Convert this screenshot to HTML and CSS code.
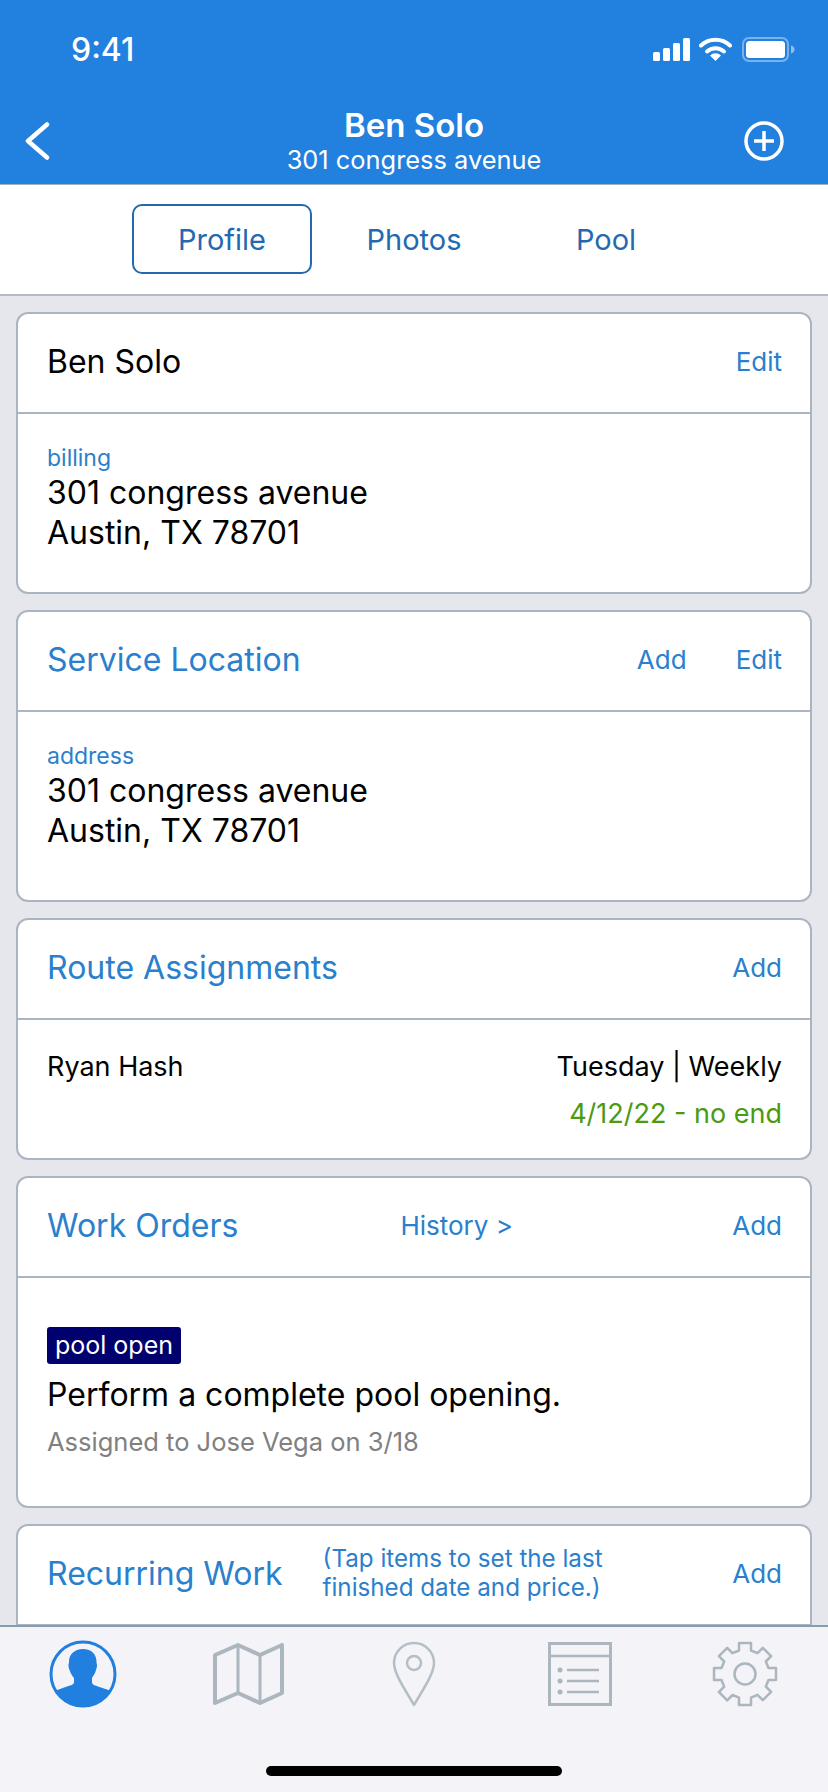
FILE: index.html
```html
<!DOCTYPE html>
<html lang="en">
<head>
    <meta charset="UTF-8">
    <meta name="viewport" content="width=device-width, initial-scale=1.0">
    <title>Ben Solo</title>
    <link rel="stylesheet" href="styles.css">
</head>
<body>
<div class="app">

    <!-- Blue header -->
    <div class="header">
        <div class="status-bar">
            <span class="time">9:41</span>
            <div class="status-icons">
                <svg class="signal" width="37" height="23" viewBox="0 0 37 23"><rect x="0" y="14" width="7" height="9" rx="1.5"/><rect x="10" y="10" width="7" height="13" rx="1.5"/><rect x="20" y="5" width="7" height="18" rx="1.5"/><rect x="30" y="0" width="7" height="23" rx="1.5"/></svg>
                <svg width="33" height="24" viewBox="0 0 33 24"><path d="M2 8.500a21 21 0 0 1 29 0" fill="none" stroke="#fff" stroke-width="4" stroke-linecap="round"/><path d="M8 14.500a12.500 12.500 0 0 1 17 0" fill="none" stroke="#fff" stroke-width="4" stroke-linecap="round"/><path d="M16.500 24l-5.500-5.500a8 8 0 0 1 11 0z"/></svg>
                <svg width="53" height="25" viewBox="0 0 53 25"><rect x="1" y="1" width="45" height="23" rx="6" fill="none" stroke="#fff" stroke-opacity="0.4" stroke-width="2"/><rect x="4" y="4" width="39" height="17" rx="3.500"/><path d="M49 8.500c2 .5 3.500 2 3.500 4s-1.500 3.500-3.500 4z" fill-opacity="0.5"/></svg>
            </div>
        </div>
        <div class="nav-bar">
            <svg class="back-icon" width="26" height="38" viewBox="0 0 26 38"><path d="M23 2.500L4 19l19 16.500" fill="none" stroke="#fff" stroke-width="4.500" stroke-linecap="round" stroke-linejoin="round"/></svg>
            <div class="nav-title">
                <div class="nav-name">Ben Solo</div>
                <div class="nav-sub">301 congress avenue</div>
            </div>
            <svg class="add-icon" width="40" height="40" viewBox="0 0 40 40"><circle cx="20" cy="20" r="18" fill="none" stroke="#fff" stroke-width="3.500"/><path d="M20 10v20M10 20h20" stroke="#fff" stroke-width="3.500"/></svg>
        </div>
    </div>

    <!-- Tabs -->
    <div class="tabs">
        <div class="tab active">Profile</div>
        <div class="tab">Photos</div>
        <div class="tab">Pool</div>
    </div>

    <!-- Cards -->
    <div class="content">
        <div class="card">
            <div class="card-head">
                <span class="card-name">Ben Solo</span>
                <span class="link">Edit</span>
            </div>
            <div class="card-body address-body">
                <div class="label">billing</div>
                <div class="address">301 congress avenue<br>Austin, TX 78701</div>
            </div>
        </div>

        <div class="card">
            <div class="card-head">
                <span class="card-title">Service Location</span>
                <div class="head-links">
                    <span class="link">Add</span>
                    <span class="link">Edit</span>
                </div>
            </div>
            <div class="card-body address-body tall">
                <div class="label">address</div>
                <div class="address">301 congress avenue<br>Austin, TX 78701</div>
            </div>
        </div>

        <div class="card">
            <div class="card-head">
                <span class="card-title">Route Assignments</span>
                <span class="link">Add</span>
            </div>
            <div class="card-body route-body">
                <span class="route-name">Ryan Hash</span>
                <div class="route-info">
                    <div class="route-day">Tuesday | Weekly</div>
                    <div class="route-dates">4/12/22 - no end</div>
                </div>
            </div>
        </div>

        <div class="card">
            <div class="card-head">
                <span class="card-title">Work Orders</span>
                <span class="link history">History &gt;</span>
                <span class="link">Add</span>
            </div>
            <div class="card-body work-body">
                <span class="badge">pool open</span>
                <div class="work-text">Perform a complete pool opening.</div>
                <div class="work-meta">Assigned to Jose Vega on 3/18</div>
            </div>
        </div>

        <div class="card">
            <div class="card-head">
                <span class="card-title">Recurring Work</span>
                <span class="link hint">(Tap items to set the last<br>finished date and price.)</span>
                <span class="link">Add</span>
            </div>
            <div class="card-body recurring-body"></div>
        </div>
    </div>

    <!-- Bottom tab bar -->
    <div class="tabbar">
        <div class="tabbar-item">
            <svg width="68" height="68" viewBox="0 0 68 68"><defs><clipPath id="round"><circle cx="34" cy="34" r="32"/></clipPath></defs><circle cx="34" cy="34" r="32" fill="none" stroke="#217fdf" stroke-width="3"/><g clip-path="url(#round)"><path d="M34 9c9 0 14 6 13.500 14 .8 1 .8 4-.5 7-1 4-3 6-4 8v5c1 2 3 2.500 6 3.500l15 5V68H4V51.500l14-5c3-1 6-1.500 7-3.500v-5c-1.500-2-3.500-4.500-4.500-8-1.300-3-1.300-6-.5-7C19.500 15 25 9 34 9z" fill="#217fdf"/></g></svg>
        </div>
        <div class="tabbar-item">
            <svg width="72" height="64" viewBox="0 0 72 64"><path d="M3 13L26 3l22 10 22-10v48L48 61 26 51 3 61z" fill="none" stroke="#abb6bf" stroke-width="4" stroke-linejoin="round"/><path d="M26 3v48M48 13v48" fill="none" stroke="#abb6bf" stroke-width="3"/></svg>
        </div>
        <div class="tabbar-item">
            <svg width="44" height="66" viewBox="0 0 44 66"><path d="M22 64C14 50 2 33 2 22a20 20 0 0 1 40 0c0 11-12 28-20 42z" fill="none" stroke="#b5bec6" stroke-width="2.500" stroke-linejoin="round"/><circle cx="22" cy="22" r="7" fill="none" stroke="#b5bec6" stroke-width="2.500"/></svg>
        </div>
        <div class="tabbar-item">
            <svg width="64" height="64" viewBox="0 0 64 64"><rect x="1.500" y="1.500" width="61" height="61" fill="none" stroke="#abb6bf" stroke-width="3"/><path d="M2 14h60M19 28h32M19 39h32M19 50h32" stroke="#abb6bf" stroke-width="2.500"/><circle cx="12" cy="28" r="2.500" fill="#abb6bf"/><circle cx="12" cy="39" r="2.500" fill="#abb6bf"/><circle cx="12" cy="50" r="2.500" fill="#abb6bf"/></svg>
        </div>
        <div class="tabbar-item">
            <svg width="66" height="66" viewBox="0 0 66 66"><path d="M27 2h12v7.500l6.500 2.700 5.300-5.300 8.300 8.300-5.300 5.300 2.700 6.500H64v12h-7.500l-2.700 6.500 5.300 5.300-8.300 8.300-5.300-5.300L39 56.700V64H27v-7.300l-6.500-2.700-5.300 5.300-8.300-8.300 5.300-5.300L9.500 39H2V27h7.500l2.700-6.500-5.300-5.300 8.300-8.300 5.300 5.300L27 9.500z" fill="none" stroke="#abb6bf" stroke-width="2.500" stroke-linejoin="round"/><circle cx="33" cy="33" r="10.500" fill="none" stroke="#abb6bf" stroke-width="2.500"/></svg>
        </div>
        <div class="home-bar"></div>
    </div>
</div>
</body>
</html>
```

FILE: styles.css
```css
body {
    font-family: Inter, "Liberation Sans", sans-serif;
    margin: 0;
    padding: 0;
    background-color: #e6e7ec;
}
.app {
    display: flex;
    flex-direction: column;
    width: 828px;
    height: 1792px;
    overflow: hidden;
}
.header {
    background-color: #2280de;
    color: white;
    height: 184px;
    flex: none;
}
.status-bar {
    display: flex;
    justify-content: space-between;
    align-items: center;
    height: 50px;
    padding: 24px 33px 0 71px;
}
.time {
    font-size: 32px;
    font-weight: 500;
}
.status-icons {
    display: flex;
    align-items: center;
    gap: 10px;
}
.status-icons svg {
    fill: white;
}
.status-icons .signal {
    margin-right: -1px;
}
.nav-bar {
    display: grid;
    grid-template-columns: 1fr auto 1fr;
    align-items: center;
    padding: 32px 44px 0;
}
.back-icon {
    margin-left: -20px;
}
.add-icon {
    justify-self: end;
}
.nav-title {
    text-align: center;
}
.nav-name {
    font-size: 33px;
    font-weight: 600;
    line-height: 38px;
}
.nav-sub {
    font-size: 25.4px;
    line-height: 31px;
}
.tabs {
    display: flex;
    justify-content: center;
    gap: 12px;
    flex: none;
    background: white;
    padding: 19px 0 20px;
    border-top: 1px solid #9fb0c4;
    border-bottom: 2px solid #b4b9c6;
}
.tab {
    box-sizing: border-box;
    width: 180px;
    height: 70px;
    line-height: 67px;
    text-align: center;
    font-size: 29px;
    color: #2468b0;
    border: 2px solid transparent;
}
.tab.active {
    border-color: #2468b0;
    border-radius: 10px;
}
.content {
    flex: 1;
    min-height: 0;
    overflow: hidden;
    padding: 16px 16px 0;
    display: flex;
    flex-direction: column;
    gap: 16px;
}
.card {
    flex: none;
    background: white;
    border: 2px solid #aab5c2;
    border-radius: 12px;
}
.card-head {
    display: flex;
    align-items: center;
    justify-content: space-between;
    box-sizing: border-box;
    height: 100px;
    padding: 0 28px 4px 29px;
    border-bottom: 2px solid #aab5c2;
}
.card-name {
    font-size: 32px;
    color: black;
}
.card-title {
    font-size: 32px;
    color: #2a80cc;
}
.link {
    font-size: 26px;
    color: #2a80cc;
}
.head-links {
    display: flex;
    gap: 49px;
}
.history {
    margin-left: 162px;
    margin-right: auto;
}
.hint {
    font-size: 24.2px;
    line-height: 29px;
    margin-left: 40px;
    margin-right: auto;
}
.card-body {
    padding: 0 28px 0 29px;
}
.address-body {
    box-sizing: border-box;
    padding-top: 30px;
    height: 178px;
}
.address-body.tall {
    height: 188px;
}
.label {
    font-size: 23px;
    line-height: 29px;
    color: #2a80cc;
}
.address {
    font-size: 32px;
    line-height: 40px;
    color: black;
}
.route-body {
    box-sizing: border-box;
    display: flex;
    justify-content: space-between;
    padding-top: 32px;
    height: 138px;
}
.route-name {
    font-size: 27px;
    line-height: 30px;
    color: black;
}
.route-info {
    text-align: right;
    font-size: 27px;
}
.route-day {
    line-height: 30px;
    color: black;
}
.route-dates {
    margin-top: 17px;
    line-height: 30px;
    color: #4c9a10;
}
.work-body {
    box-sizing: border-box;
    padding-top: 49px;
    height: 228px;
}
.badge {
    display: inline-block;
    background: #00006e;
    color: white;
    font-size: 25px;
    line-height: 37px;
    padding: 0 8px;
    border-radius: 3px;
}
.work-text {
    font-size: 32px;
    line-height: 40px;
    margin-top: 11px;
    color: black;
}
.work-meta {
    font-size: 25.5px;
    line-height: 30px;
    margin-top: 12px;
    color: #808080;
}
.recurring-body {
    height: 60px;
}
.tabbar {
    position: relative;
    flex: none;
    box-sizing: border-box;
    height: 167px;
    display: grid;
    grid-template-columns: repeat(5, 1fr);
    align-items: start;
    justify-items: center;
    padding-top: 14px;
    background: #f4f3f7;
    border-top: 2px solid #8a9bab;
}
.tabbar-item {
    display: flex;
    align-items: center;
    height: 66px;
}
.home-bar {
    position: absolute;
    left: 266px;
    bottom: 16px;
    width: 296px;
    height: 10px;
    background: black;
    border-radius: 5px;
}
```
